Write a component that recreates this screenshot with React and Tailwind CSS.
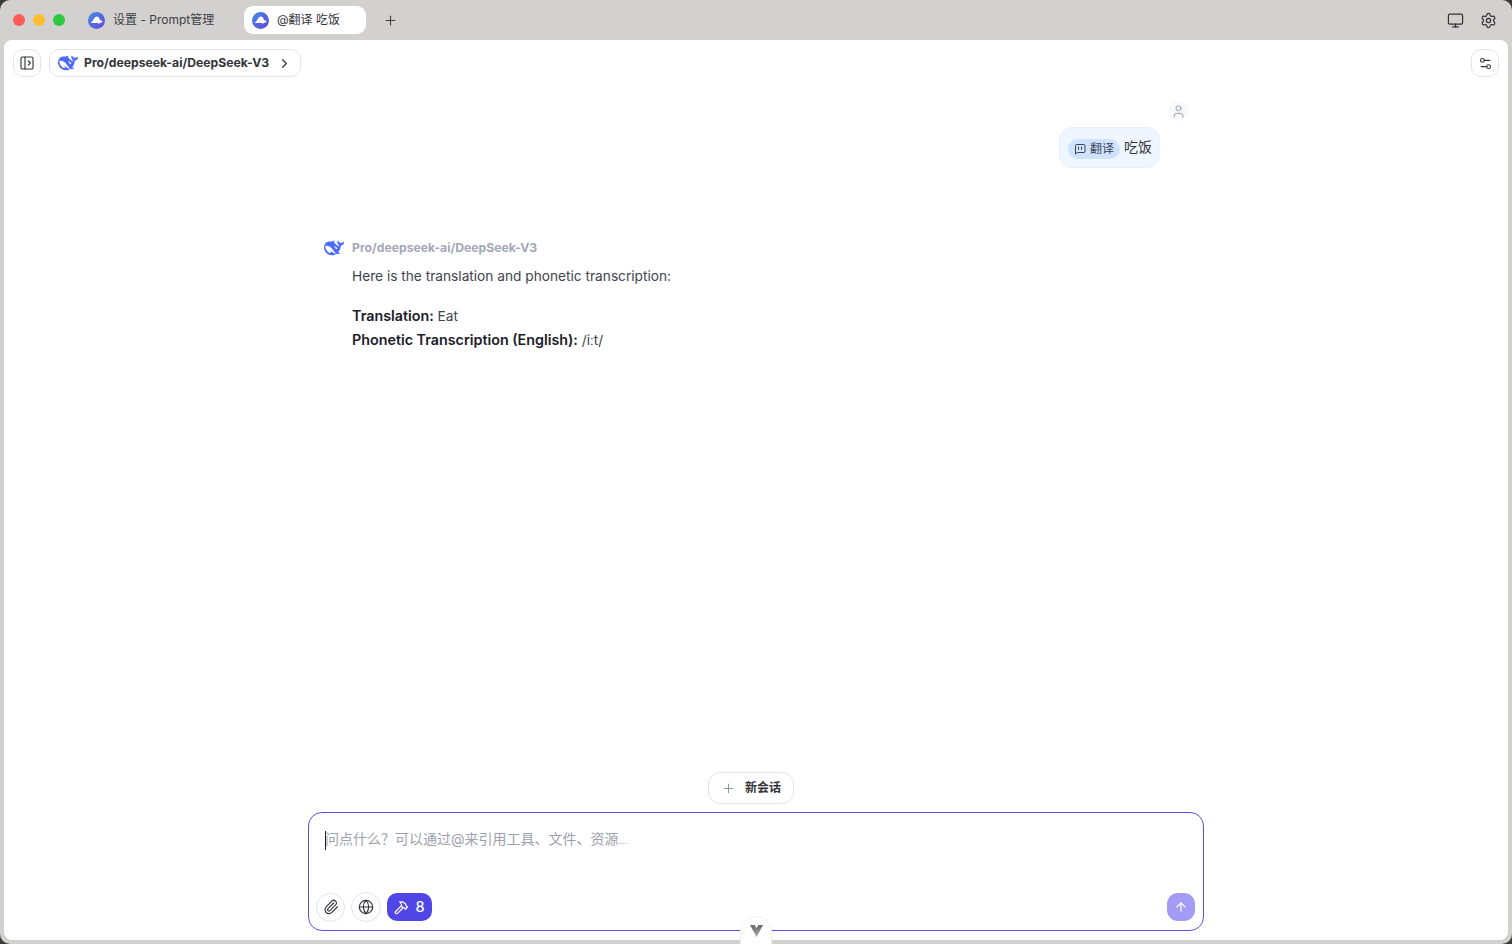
import { Plus, Monitor, Settings, PanelLeftOpen, ChevronRight, Settings2, User, Paperclip, Globe, Hammer, ArrowUp } from 'lucide-react'

const sans = 'font-["Inter","Noto_Sans_CJK_SC",sans-serif]'

function AppLogo() {
  return (
    <svg width="17" height="17" viewBox="0 0 17 17" className="shrink-0">
      <defs>
        <linearGradient id="applogo" x1="0" y1="0" x2="1" y2="1">
          <stop offset="0" stopColor="#3f8fe8" />
          <stop offset="1" stopColor="#6a45d8" />
        </linearGradient>
      </defs>
      <circle cx="8.5" cy="8.5" r="8.5" fill="url(#applogo)" />
      <path d="M2.5 10.5c1-.2 1.800-.9 2.400-2 .8-1.600 2-4 3.800-4 1.800 0 2.800 1.600 3.200 3.400.9.100 2 .7 2.800 1.800-.8.800-1.800 1-2.800 1-.3.700-.8 1.100-1.400 1.300l-.3-1.300c-2.600.5-5.400.5-7.700-.2z" fill="#fff" />
    </svg>
  )
}

function Whale({ size = 20 }) {
  return (
    <svg width={size} height={size} viewBox="0 0 24 24" className="shrink-0">
      <path
        fill="#4d6bfe"
        d="M23.748 4.482c-.254-.124-.364.113-.512.234-.051.039-.094.09-.137.136-.372.397-.806.657-1.373.626-.829-.046-1.537.214-2.163.848-.133-.782-.575-1.248-1.247-1.548-.352-.156-.708-.311-.955-.65-.172-.241-.219-.51-.305-.774-.055-.16-.11-.323-.293-.35-.2-.031-.278.136-.356.276-.313.572-.434 1.202-.422 1.84.027 1.436.633 2.58 1.838 3.393.137.093.172.187.129.323-.082.28-.18.552-.266.833-.055.179-.137.217-.329.14a5.526 5.526 0 01-1.736-1.18c-.857-.828-1.631-1.742-2.597-2.458a11.365 11.365 0 00-.689-.471c-.985-.957.13-1.743.388-1.836.27-.098.093-.432-.779-.428-.872.004-1.67.295-2.687.684a3.055 3.055 0 01-.465.137 9.597 9.597 0 00-2.883-.102c-1.885.21-3.39 1.102-4.497 2.623C.082 8.606-.231 10.684.152 12.85c.403 2.284 1.569 4.175 3.36 5.653 1.858 1.533 3.997 2.284 6.438 2.14 1.482-.085 3.133-.284 4.994-1.86.47.234.962.327 1.78.397.63.059 1.236-.03 1.705-.128.735-.156.684-.837.419-.961-2.155-1.004-1.682-.595-2.113-.926 1.096-1.296 2.746-2.642 3.392-7.003.05-.347.007-.565 0-.845-.004-.17.035-.237.23-.256a4.173 4.173 0 001.545-.475c1.396-.763 1.96-2.015 2.093-3.517.02-.23-.004-.467-.247-.588zM11.581 18c-2.089-1.642-3.102-2.183-3.52-2.16-.392.024-.321.471-.235.763.09.288.207.486.371.739.114.167.192.416-.113.603-.673.416-1.842-.14-1.897-.167-1.361-.802-2.5-1.86-3.301-3.307-.774-1.393-1.224-2.887-1.298-4.482-.02-.386.093-.522.477-.592a4.696 4.696 0 011.529-.039c2.132.312 3.946 1.265 5.468 2.774.868.86 1.525 1.887 2.202 2.891.72 1.066 1.494 2.082 2.48 2.914.348.292.625.514.891.677-.802.09-2.14.11-3.054-.614zm1-6.44a.306.306 0 01.415-.287.302.302 0 01.2.288.306.306 0 01-.31.307.303.303 0 01-.304-.308zm3.11 1.596c-.2.081-.399.151-.59.16a1.245 1.245 0 01-.798-.254c-.274-.23-.47-.358-.552-.758a1.73 1.73 0 01.016-.588c.07-.327-.008-.537-.239-.727-.187-.156-.426-.199-.688-.199a.559.559 0 01-.254-.078c-.11-.054-.2-.19-.114-.358.028-.054.16-.186.192-.21.356-.202.767-.136 1.146.016.352.144.618.408 1.001.782.391.451.462.576.685.914.176.265.336.537.445.848.067.195-.019.354-.25.452z"
      />
    </svg>
  )
}

// square speech bubble with two ticks, lucide has no exact match
function ChipIcon() {
  return (
    <svg width="12" height="12" viewBox="0 0 24 24" fill="none" stroke="currentColor" strokeWidth="2" strokeLinecap="round" strokeLinejoin="round" className="shrink-0">
      <path d="M22 17a2 2 0 0 1-2 2H7l-4 3V5a2 2 0 0 1 2-2h15a2 2 0 0 1 2 2z" />
      <path d="M9 8v5M15 8v5" />
    </svg>
  )
}

function IconButton({ children, className = '' }) {
  return (
    <div className={`flex items-center justify-center rounded-[10px] border border-[#e2e4ec] bg-white ${className}`}>
      {children}
    </div>
  )
}

export default function App() {
  return (
    <div className="h-[944px] w-[1512px] bg-[#3c3c3c]">
      <div className={`flex h-full flex-col overflow-hidden rounded-[10px] bg-[#d2d1cf] ${sans}`}>
        {/* title bar */}
        <div className="flex h-10 shrink-0 items-center pl-[13px] pr-[15px]">
          <div className="flex gap-2">
            <span className="size-3 rounded-full bg-[#fc5b57]" />
            <span className="size-3 rounded-full bg-[#fdbb2e]" />
            <span className="size-3 rounded-full bg-[#2bc840]" />
          </div>
          <div className="ml-[21px] flex h-[27px] w-[158px] items-center gap-2 pl-[2px]">
            <AppLogo />
            <span className="text-[12px] text-[#3f4046]">设置 - Prompt管理</span>
          </div>
          <div className="flex h-[28px] w-[122px] items-center gap-2 rounded-[9px] bg-white pl-2">
            <AppLogo />
            <span className="text-[12px] text-[#33343a]">@翻译 吃饭</span>
          </div>
          <Plus size={15} strokeWidth={1.8} className="ml-[17px] text-[#3f4046]" />
          <div className="ml-auto flex items-center gap-4">
            <Monitor size={17} strokeWidth={1.7} className="text-[#2f3036]" />
            <Settings size={17} strokeWidth={1.7} className="text-[#2f3036]" />
          </div>
        </div>

        {/* main panel */}
        <div className="relative mx-1 mb-1 flex min-h-0 flex-1 flex-col rounded-lg bg-white">
          <div className="flex shrink-0 items-center pl-[9px] pr-[9px] pt-[9px]">
            <IconButton className="size-[28px]">
              <PanelLeftOpen size={16} strokeWidth={1.7} className="text-[#33343a]" />
            </IconButton>
            <div className="ml-2 flex h-[28px] w-[252px] items-center rounded-[10px] border border-[#e2e4ec] pl-2">
              <Whale />
              <span className="ml-[6px] text-[12.2px] font-bold text-[#33343a]">Pro/deepseek-ai/DeepSeek-V3</span>
              <ChevronRight size={15} strokeWidth={2} className="ml-2 text-[#33343a]" />
            </div>
            <IconButton className="ml-auto size-[28px]">
              <Settings2 size={15} strokeWidth={1.7} className="text-[#33343a]" />
            </IconButton>
          </div>

          {/* messages */}
          <div className="min-h-0 flex-1 px-[320px] pt-[24px]">
            <div className="flex flex-col items-end">
              <div className="flex size-[20px] items-center justify-center rounded-full bg-[#f8f9fb]">
                <User size={15} strokeWidth={1.5} className="text-[#8f95a3]" />
              </div>
              <div className="mt-[6px] mr-[28px] flex h-[41px] items-center gap-1 rounded-[13px] border border-[#e8effb] bg-[#eff6ff] pl-2 pr-[7px]">
                <span className="mt-[3px] flex h-[20px] items-center gap-1 rounded-full bg-[#cfe3fe] px-[6px] text-[12px] text-[#3d4454]">
                  <ChipIcon />
                  翻译
                </span>
                <span className="mb-[3px] text-[14px] text-[#33343a]">吃饭</span>
              </div>
            </div>

            <div className="mt-[70px]">
              <div className="flex h-5 items-center">
                <Whale size={20} />
                <span className="ml-2 text-[12.2px] font-bold text-[#a3a8b5]">Pro/deepseek-ai/DeepSeek-V3</span>
              </div>
              <div className="ml-[28px] mt-[6px] text-[13.7px] leading-[24px] text-[#40444e]">
                <p>Here is the translation and phonetic transcription:</p>
                <p className="mt-4">
                  <strong className="text-[14.3px] font-semibold text-[#1d2029]">Translation:</strong> Eat
                </p>
                <p>
                  <strong className="text-[14.3px] font-semibold text-[#1d2029]">Phonetic Transcription (English):</strong> /iːt/
                </p>
              </div>
            </div>
          </div>

          {/* composer */}
          <div className="shrink-0 px-[304px] pb-[9px]">
            <div className="mb-[8px] flex justify-center pr-[10px]">
              <div className="flex h-[32px] w-[86px] items-center justify-center gap-[9px] rounded-[12px] border border-[#e2e4ec] bg-white">
                <Plus size={15} strokeWidth={1.6} className="text-[#8f95a3]" />
                <span className="text-[12px] font-semibold text-[#33343a]">新会话</span>
              </div>
            </div>
            <div className="flex h-[119px] flex-col rounded-[14px] border border-[#5b50e6] pb-2 pl-[7px] pr-2">
              <div className="flex-1 pl-[9px] pt-[16px] text-[14px] leading-[20px] text-[#9ca1ad]">
                <span className="mr-[-1px] inline-block h-[19px] w-px bg-[#1d2029] align-middle" />
                问点什么？可以通过@来引用工具、文件、资源<span className="text-[10px]">…</span>
              </div>
              <div className="flex items-center">
                <IconButton className="size-[29px] rounded-full">
                  <Paperclip size={16} strokeWidth={1.7} className="text-[#33343a]" />
                </IconButton>
                <IconButton className="ml-[6px] size-[30px] rounded-full">
                  <Globe size={16} strokeWidth={1.7} className="text-[#33343a]" />
                </IconButton>
                <div className="ml-[6px] flex h-[28px] w-[45px] items-center justify-center gap-[6px] rounded-[10px] bg-[#4f46e5] text-[14.5px] font-medium text-white">
                  <Hammer size={15} strokeWidth={1.9} />
                  8
                </div>
                <div className="ml-auto flex size-[28px] items-center justify-center rounded-[11px] bg-[#a49cf4]">
                  <ArrowUp size={14} strokeWidth={2} className="text-white" />
                </div>
              </div>
            </div>
          </div>

          {/* devtools handle, sits over the composer edge */}
          <div className="absolute bottom-[-4px] left-[736px] flex h-[28px] w-8 items-start justify-center rounded-t-full border border-b-0 border-[#f1f1f1] bg-white pt-[8px]">
            <svg width="13" height="12" viewBox="0 0 13 12">
              <defs>
                <linearGradient id="vuemark" x1="0" y1="0" x2="0" y2="1">
                  <stop offset="0" stopColor="#666" />
                  <stop offset="1" stopColor="#aaa" />
                </linearGradient>
              </defs>
              <path d="M0 0h4.500l2 3 2-3H13L6.500 12z" fill="url(#vuemark)" />
            </svg>
          </div>
        </div>
      </div>
    </div>
  )
}
